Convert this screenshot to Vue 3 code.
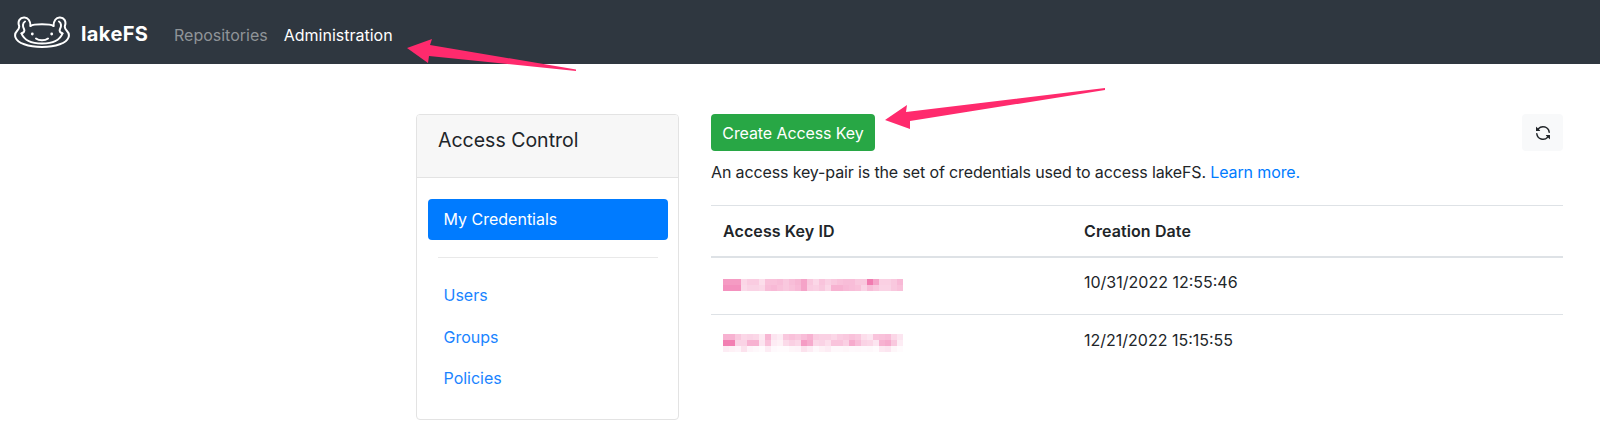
<script setup>
const row1 = [
  [.55,.55,.55,.22,.28,.28,.18,.34,.34,.36,.3,.36,.4,.5,.3,.22,.32,.26,.3,.34,.36,.36,.3,.3,.72,.5,.26,.26,.3,.38],
  [.6,.6,.6,.2,.24,.24,.22,.36,.38,.34,.3,.34,.38,.5,.28,.26,.3,.22,.42,.42,.38,.36,.34,.24,.36,.3,.24,.24,.3,.34]
]
const row2 = [
  [.42,.42,.3,.22,.24,.22,.12,.4,.14,.1,.3,.34,.3,.36,.42,.28,.26,.26,.22,.28,.3,.34,.3,.18,.14,.32,.34,.36,.22,.14],
  [.7,.7,.24,.24,.42,.42,.14,.34,.1,.08,.2,.26,.22,.54,.46,.22,.24,.18,.32,.32,.26,.46,.36,.24,.22,.14,.42,.46,.3,.1],
  [.1,.08,.06,.16,.06,.04,.02,.1,.03,.02,.02,.05,.06,.16,.1,.04,.08,.1,.04,.04,.05,.03,.04,.03,.04,.02,.12,.14,.05,.02]
]
const rows = [
  { date: '10/31/2022 12:55:46', grid: row1 },
  { date: '12/21/2022 15:15:55', grid: row2 }
]
const cell = (a) => ({ background: `rgba(236, 72, 146, ${a})` })
</script>

<template>
  <div class="page">
    <nav class="navbar">
      <a class="brand">
        <svg class="logo" viewBox="0 0 56 32" width="56" height="32" fill="none" stroke="#fff" stroke-width="2" stroke-linecap="round" stroke-linejoin="round">
          <path d="M16.500 10C16.500 5 14 1.200 10 1.500C6 1.800 3.500 5 5 9.500C5.800 12 4.500 13.500 3 15C1 17 .8 19.500 1.500 21.500C3.500 27 14 31 28 31C42 31 52.500 27 54.500 21.500C55.200 19.500 55 17 53 15C51.500 13.500 50.200 12 51 9.500C52.500 5 50 1.800 46 1.500C42 1.200 39.500 5 39.500 10" />
          <path d="M16.500 10C20 7.800 36 7.800 39.500 10" />
          <path d="M11 5.500C8.500 7 8.500 10.500 10 13C11 15 10 16.500 7.500 17.500" />
          <path d="M45 5.500C47.500 7 47.500 10.500 46 13C45 15 46 16.500 48.500 17.500" />
          <path d="M7.500 17.500C10 24 18 27.500 28 27.500C38 27.500 46 24 48.500 17.500" />
          <path d="M22 22.500C25 24.800 31 24.800 34 22.500" />
          <circle cx="18.300" cy="18" r="1.400" fill="#fff" stroke="none" />
          <circle cx="37.700" cy="18" r="1.400" fill="#fff" stroke="none" />
        </svg>
        <span class="brand-name">lakeFS</span>
      </a>
      <a class="nav-link muted">Repositories</a>
      <a class="nav-link active">Administration</a>
    </nav>

    <div class="content">
      <aside class="card">
        <div class="card-header">Access Control</div>
        <div class="card-body">
          <a class="pill">My Credentials</a>
          <div class="divider"></div>
          <a class="side-link">Users</a>
          <a class="side-link">Groups</a>
          <a class="side-link">Policies</a>
        </div>
      </aside>

      <main class="main">
        <div class="toolbar">
          <button class="btn-create">Create Access Key</button>
          <button class="btn-refresh" aria-label="Refresh">
            <svg viewBox="0 0 16 16" width="16" height="16" fill="#212529">
              <path d="M1.705 8.005a.75.75 0 0 1 .834.656 5.5 5.5 0 0 0 9.592 2.97l-1.204-1.204a.25.25 0 0 1 .177-.427h3.646a.25.25 0 0 1 .25.25v3.646a.25.25 0 0 1-.427.177l-1.38-1.38A7.002 7.002 0 0 1 1.05 8.84a.75.75 0 0 1 .656-.834ZM8 2.5a5.487 5.487 0 0 0-4.131 1.869l1.204 1.204A.25.25 0 0 1 4.896 6H1.25A.25.25 0 0 1 1 5.75V2.104a.25.25 0 0 1 .427-.177l1.38 1.38A7.002 7.002 0 0 1 14.95 7.16a.75.75 0 0 1-1.49.178A5.5 5.5 0 0 0 8 2.5Z" />
            </svg>
          </button>
        </div>
        <p class="intro">An access key-pair is the set of credentials used to access lakeFS. <a class="link">Learn more.</a></p>
        <table class="table">
          <thead>
            <tr><th class="col-key">Access Key ID</th><th>Creation Date</th></tr>
          </thead>
          <tbody>
            <tr v-for="row in rows" :key="row.date">
              <td>
                <div class="redacted">
                  <div v-for="(line, r) in row.grid" :key="r" class="redacted-line">
                    <span v-for="(s, i) in line" :key="i" class="cell" :style="cell(s)"></span>
                  </div>
                </div>
              </td>
              <td>{{ row.date }}</td>
            </tr>
          </tbody>
        </table>
      </main>
    </div>

    <svg class="arrows" width="1600" height="444" viewBox="0 0 1600 444">
      <polygon fill="#ff2a6d" points="407,48 432,39 430,45 576,69.500 576,71 429,56 428,63" />
      <polygon fill="#ff2a6d" points="885,120 907,105 906,112 1105,88 1105,90 910,121 910,129" />
    </svg>
  </div>
</template>

<style>
html, body { margin: 0; background: #fff; }
</style>

<style scoped>
.page {
  position: relative;
  width: 1600px;
  height: 444px;
  overflow: hidden;
  font-family: Inter, "Liberation Sans", sans-serif;
  font-size: 16px;
  line-height: 24px;
  color: #212529;
  background: #fff;
}
.navbar {
  display: flex;
  align-items: center;
  height: 64px;
  padding-left: 14px;
  background: #2f3740;
  box-sizing: border-box;
}
.brand { display: flex; align-items: center; }
.brand-name {
  margin-left: 11px;
  width: 93px;
  padding-top: 4px;
  color: #fff;
  font-weight: 700;
  font-size: 20px;
  letter-spacing: 0.4px;
}
.nav-link { font-size: 16px; padding-top: 6px; }
.muted { color: #8f9498; margin-right: 16px; }
.active { color: #fff; }
.content {
  display: flex;
  gap: 32px;
  padding: 50px 37px 0 416px;
}
.card {
  width: 263px;
  height: 306px;
  flex: none;
  box-sizing: border-box;
  border: 1px solid #e3e3e3;
  border-radius: 4px;
  overflow: hidden;
}
.card-header {
  height: 63px;
  box-sizing: border-box;
  padding: 13px 21px;
  background: #f7f7f7;
  border-bottom: 1px solid #e3e3e3;
  font-size: 19.5px;
}
.card-body { padding: 21px 10px 0 10.500px; }
.pill {
  display: block;
  height: 41px;
  padding: 8px 16px;
  box-sizing: border-box;
  background: #007bff;
  border-radius: 4px;
  color: #fff;
}
.divider {
  height: 1px;
  margin: 17px 10px 16px;
  background: #e9e9e9;
}
.side-link {
  display: block;
  height: 41.500px;
  padding: 9px 16px;
  box-sizing: border-box;
  color: #1a84ff;
}
.main { flex: 1; min-width: 0; }
.toolbar { display: flex; justify-content: space-between; align-items: flex-start; }
.btn-create {
  height: 37px;
  width: 164px;
  border: 0;
  border-radius: 4px;
  background: #28a745;
  color: #fff;
  font: inherit;
  letter-spacing: -0.1px;
  padding: 0;
}
.btn-refresh {
  display: flex;
  align-items: center;
  justify-content: center;
  width: 41px;
  height: 37px;
  border: 0;
  border-radius: 4px;
  background: #f8f9fa;
  padding: 0;
}
.intro { margin: 9px 0 0; height: 45px; letter-spacing: -0.13px; }
.link { color: #007bff; }
.table { width: 100%; border-collapse: collapse; }
.col-key { width: 361px; }
th, td {
  padding: 12px;
  text-align: left;
}
th {
  height: 51px;
  box-sizing: border-box;
  font-weight: 600;
  letter-spacing: 0.1px;
  border-top: 1px solid #dee2e6;
  border-bottom: 2px solid #dee2e6;
}
td { height: 58px; box-sizing: border-box; vertical-align: top; }
tbody tr:first-child td { border-bottom: 1px solid #dee2e6; }
tbody tr:last-child td { padding-top: 13px; }
.redacted {
  width: 180px;
  margin-top: 9px;
  filter: blur(0.6px);
}
tbody tr:last-child .redacted { margin-top: 6px; }
.redacted-line { display: flex; height: 6px; }
.cell { flex: 1; }
.arrows {
  position: absolute;
  left: 0;
  top: 0;
  pointer-events: none;
}
</style>
